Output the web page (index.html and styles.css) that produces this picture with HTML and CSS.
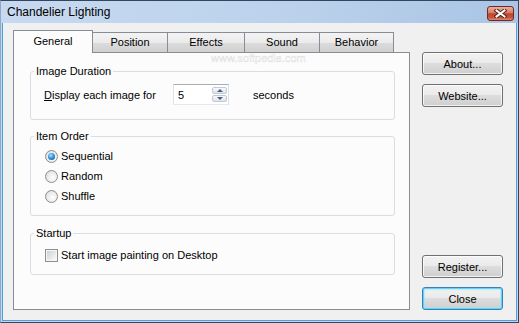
FILE: index.html
```html
<!DOCTYPE html>
<html lang="en">
<head>
    <meta charset="UTF-8">
    <title>Chandelier Lighting</title>
    <link rel="stylesheet" href="styles.css">
</head>
<body>

    <div class="window">

        <div class="titlebar">
            <span class="title">Chandelier Lighting</span>
            <div class="closeX">
                <svg width="13" height="9" viewBox="0 0 13 9">
                    <path d="M2.5 1.5 L10.5 7.5 M10.5 1.5 L2.5 7.5" stroke="#5a2218" stroke-width="4" stroke-linecap="square"/>
                    <path d="M2.5 1.5 L10.5 7.5 M10.5 1.5 L2.5 7.5" stroke="#ffffff" stroke-width="2" stroke-linecap="square"/>
                </svg>
            </div>
        </div>

        <div class="client">

            <div class="tabsArea">
                <div class="tabStrip">
                    <div class="tab active tGeneral">General</div>
                    <div class="tab tPosition">Position</div>
                    <div class="tab tEffects">Effects</div>
                    <div class="tab tSound">Sound</div>
                    <div class="tab tBehavior">Behavior</div>
                </div>

                <div class="panel">

                    <fieldset class="group gDuration">
                        <legend>Image Duration</legend>
                        <div class="durRow">
                            <span class="durLabel"><u>D</u>isplay each image for</span>
                            <div class="spin">
                                <span class="spinValue">5</span>
                                <div class="spinBtns">
                                    <span class="spinBtn up"></span>
                                    <span class="spinBtn down"></span>
                                </div>
                            </div>
                            <span class="unit">seconds</span>
                        </div>
                    </fieldset>

                    <fieldset class="group gOrder">
                        <legend>Item Order</legend>
                        <div class="opt"><span class="radio checked"></span>Sequential</div>
                        <div class="opt"><span class="radio"></span>Random</div>
                        <div class="opt"><span class="radio"></span>Shuffle</div>
                    </fieldset>

                    <fieldset class="group gStartup">
                        <legend>Startup</legend>
                        <div class="opt"><span class="check"></span>Start image painting on Desktop</div>
                    </fieldset>

                </div>
            </div>

            <div class="side">
                <div class="btn bAbout">About...</div>
                <div class="btn bWebsite">Website...</div>
                <div class="btn bRegister">Register...</div>
                <div class="btn bClose default">Close</div>
            </div>

        </div>

        <div class="wmSmall">www.softpedia.com</div>

    </div>

</body>
</html>
```

FILE: styles.css
```css
html {
    margin: 0;
    padding: 0;
}

body {
    margin: 0;
    padding: 0;
    overflow: hidden;
    font-family: "Liberation Sans", Arial, sans-serif;
    font-size: 11px;
    color: #000;
}

.window {
    position: relative;
    box-sizing: border-box;
    width: 519px;
    height: 323px;
    display: flex;
    flex-direction: column;
    border: 1px solid #33465d;
    border-left-color: #8fa9c9;
    background: #c2d6ee;
}

/* title bar */

.titlebar {
    height: 22px;
    display: flex;
    align-items: center;
    justify-content: space-between;
    padding: 0 4px 0 6px;
    background: linear-gradient(100deg, #c6d9f0 0%, #bcd2ec 55%, #a9c4e5 100%);
}

.title {
    font-size: 12px;
}

.closeX {
    box-sizing: border-box;
    width: 27px;
    height: 15px;
    margin-top: 2px;
    border: 1px solid #6e2b21;
    border-radius: 3px;
    background: linear-gradient(#eab0a0 0%, #d77c66 45%, #c2432c 52%, #c9533b 80%, #e08a70 100%);
    display: flex;
    align-items: center;
    justify-content: center;
}

.closeX svg {
    display: block;
}

/* client area */

.client {
    flex: 1;
    display: flex;
    gap: 12px;
    margin: 0 1px 1px 1px;
    padding: 7px 13px 10px 10px;
    border: 1px solid #4aa1dc;
    border-top: none;
    background: #f0f0f0;
}

.tabsArea {
    width: 397px;
    display: flex;
    flex-direction: column;
}

.tabStrip {
    position: relative;
    z-index: 1;
    display: flex;
    align-items: flex-end;
    height: 23px;
    margin-bottom: -1px;
}

.tab {
    box-sizing: border-box;
    height: 20px;
    margin-bottom: 1px;
    margin-left: -1px;
    padding-top: 3px;
    border: 1px solid #898c95;
    border-bottom: none;
    text-align: center;
    background: linear-gradient(#f3f3f3 0%, #ebebeb 50%, #dcdcdc 51%, #d0d0d0 100%);
}

.tab.active {
    position: relative;
    z-index: 2;
    height: 23px;
    margin-bottom: 0;
    margin-left: 0;
    padding-top: 4px;
    background: #fcfcfc;
}

.tGeneral { width: 80px; }
.tPosition { width: 76px; }
.tEffects { width: 78px; }
.tSound { width: 76px; }
.tBehavior { width: 75px; }

.panel {
    flex: 1;
    display: flex;
    flex-direction: column;
    padding-top: 12px;
    border: 1px solid #898c95;
    background: #fcfcfc;
}

/* group boxes */

.group {
    margin: 0 14px 0 16px;
    padding: 0 0 0 3px;
    min-width: 0;
    border: 1px solid #d5dfe5;
    border-radius: 3px;
}

.group legend {
    padding: 0 2px;
    line-height: 13px;
}

.gDuration {
    padding-bottom: 14px;
}

.gOrder {
    margin-top: 10px;
    padding-top: 3px;
    padding-bottom: 9px;
}

.gStartup {
    margin-top: 11px;
    padding-top: 5px;
    padding-bottom: 9px;
}

.durRow {
    display: flex;
    align-items: center;
    height: 21px;
    margin: 6px 0 0 10px;
}

.durLabel {
    width: 129px;
}

.spin {
    box-sizing: border-box;
    width: 56px;
    height: 21px;
    display: flex;
    align-items: center;
    justify-content: space-between;
    padding: 1px 1px 1px 4px;
    border: 1px solid;
    border-color: #abadb3 #dbdfe6 #e3e9ef #e2e3ea;
    background: #fff;
}

.spinBtns {
    align-self: stretch;
    width: 15px;
    display: flex;
    flex-direction: column;
    gap: 1px;
    padding: 1px 0;
}

.spinBtn {
    flex: 1;
    display: flex;
    align-items: center;
    justify-content: center;
    border: 1px solid #c3cad3;
    border-radius: 2px;
    background: linear-gradient(#f7f9fb, #dde3ea);
}

.spinBtn::after {
    content: "";
    border-left: 3px solid transparent;
    border-right: 3px solid transparent;
}

.spinBtn.up::after {
    border-bottom: 3px solid #4b5e82;
}

.spinBtn.down::after {
    border-top: 3px solid #4b5e82;
}

.unit {
    margin-left: 24px;
}

.opt {
    display: flex;
    align-items: center;
    height: 20px;
    margin-left: 11px;
}

.radio {
    box-sizing: border-box;
    width: 13px;
    height: 13px;
    margin-right: 3px;
    display: flex;
    align-items: center;
    justify-content: center;
    border: 1px solid #8e8f8f;
    border-radius: 50%;
    background: radial-gradient(circle at 60% 60%, #ffffff 0%, #eaeaea 55%, #cfcfcf 100%);
}

.radio.checked::after {
    content: "";
    width: 7px;
    height: 7px;
    border-radius: 50%;
    background: radial-gradient(circle at 40% 35%, #a8e4ff 0%, #2d8ed6 50%, #0e4f8a 100%);
}

.check {
    box-sizing: border-box;
    width: 13px;
    height: 13px;
    margin-right: 3px;
    display: flex;
    align-items: center;
    justify-content: center;
    border: 1px solid #8e8f8f;
    background: #f6f6f6;
}

.check::after {
    content: "";
    width: 9px;
    height: 9px;
    background: linear-gradient(135deg, #cfcfcf 0%, #e9e9e9 60%, #fafafa 100%);
}

/* right buttons */

.side {
    width: 81px;
    display: flex;
    flex-direction: column;
}

.btn {
    box-sizing: border-box;
    height: 23px;
    display: flex;
    align-items: center;
    justify-content: center;
    border: 1px solid #707070;
    border-radius: 3px;
    background: linear-gradient(#f2f2f2 0%, #ebebeb 45%, #dddddd 50%, #cfcfcf 100%);
    box-shadow: inset 0 0 0 1px rgba(255, 255, 255, 0.75);
}

.bAbout {
    margin-top: 22px;
}

.bWebsite {
    margin-top: 9px;
}

.bRegister {
    margin-top: auto;
}

.bClose {
    margin-top: 9px;
}

.btn.default {
    border-color: #3c7fb1;
    box-shadow: inset 0 0 0 1px #5fd3fb, inset 0 0 1px 2px rgba(160, 230, 255, 0.6);
}

/* watermark */

.wmSmall {
    position: absolute;
    left: 210px;
    top: 51px;
    font-size: 11px;
    color: rgba(255, 255, 255, 0.8);
    -webkit-text-stroke: 0.5px rgba(150, 150, 150, 0.3);
}
```
